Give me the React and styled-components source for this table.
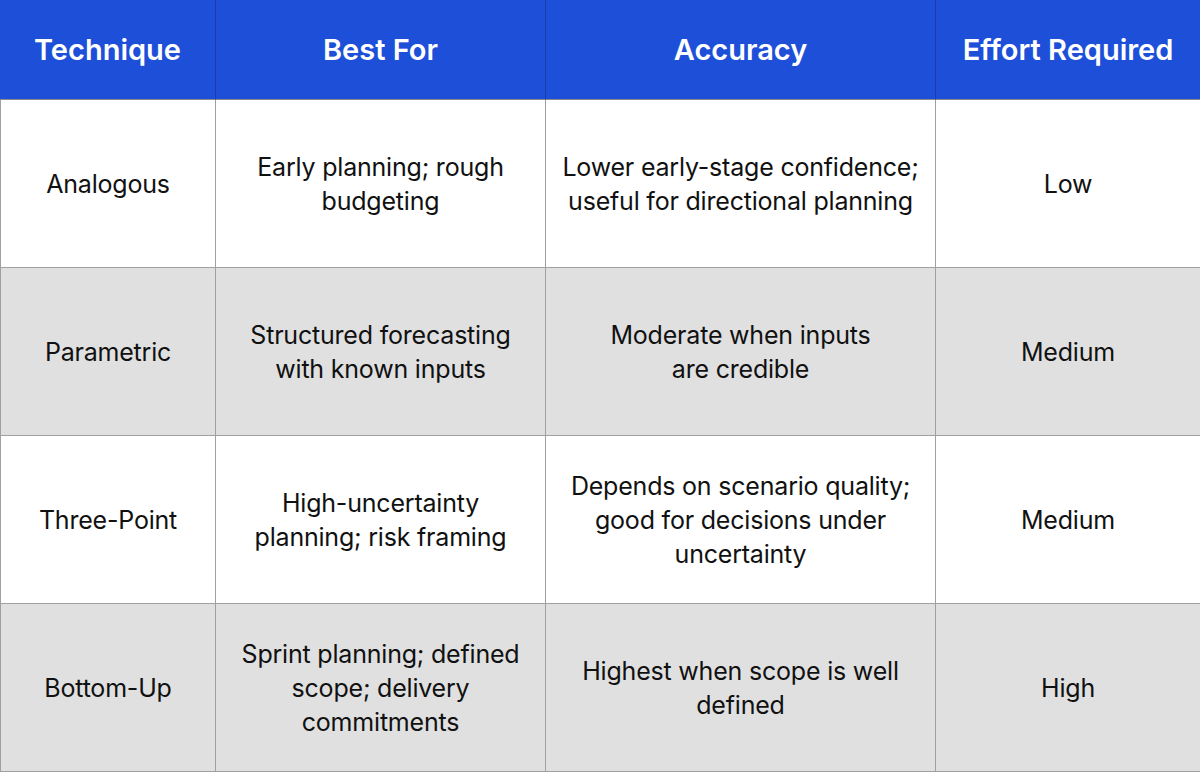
import React from "react";
import styled, { createGlobalStyle } from "styled-components";

const Global = createGlobalStyle`
  html, body { margin: 0; padding: 0; background: #ffffff; }
  body { font-family: Inter, "Noto Sans", sans-serif; }
`;

const Table = styled.div`
  display: grid;
  grid-template-columns: 215px 330px 390px 265px;
  grid-template-rows: 100px repeat(4, 168px);
  width: 1200px;
  box-sizing: border-box;
`;

const HeadCell = styled.div`
  background: #1e4fd8;
  color: #ffffff;
  font-size: 29px;
  font-weight: 600;
  letter-spacing: 0;
  display: flex;
  align-items: center;
  justify-content: center;
  text-align: center;
  box-sizing: border-box;
  border-left: ${(p) => (p.$first ? "none" : "1px solid #1a3ea8")};
  border-bottom: 1px solid #8a8a8a;
`;

const Cell = styled.div`
  background: ${(p) => (p.$shaded ? "#e0e0e0" : "#ffffff")};
  color: #111111;
  font-size: 25px;
  font-weight: 400;
  line-height: 34px;
  letter-spacing: -0.2px;
  display: flex;
  align-items: center;
  justify-content: center;
  text-align: center;
  padding: 0 8px;
  box-sizing: border-box;
  border-left: 1px solid #a0a0a0;
  border-bottom: 1px solid #a0a0a0;
`;

const headers = ["Technique", "Best For", "Accuracy", "Effort Required"];

const rows = [
  ["Analogous", ["Early planning; rough", "budgeting"], ["Lower early-stage confidence;", "useful for directional planning"], "Low"],
  ["Parametric", ["Structured forecasting", "with known inputs"], ["Moderate when inputs", "are credible"], "Medium"],
  ["Three-Point", ["High-uncertainty", "planning; risk framing"], ["Depends on scenario quality;", "good for decisions under", "uncertainty"], "Medium"],
  ["Bottom-Up", ["Sprint planning; defined", "scope; delivery", "commitments"], ["Highest when scope is well", "defined"], "High"],
];

const Line = styled.span`
  display: block;
  white-space: nowrap;
`;

const Lines = ({ value }) =>
  Array.isArray(value) ? (
    <div>
      {value.map((l, i) => (
        <Line key={i}>{l}</Line>
      ))}
    </div>
  ) : (
    <Line>{value}</Line>
  );

export default function App() {
  return (
    <>
      <Global />
      <Table>
        {headers.map((h, i) => (
          <HeadCell key={h} $first={i === 0}>
            {h}
          </HeadCell>
        ))}
        {rows.map((r, ri) =>
          r.map((c, ci) => (
            <Cell key={`${ri}-${ci}`} $shaded={ri % 2 === 1}>
              <Lines value={c} />
            </Cell>
          ))
        )}
      </Table>
    </>
  );
}
